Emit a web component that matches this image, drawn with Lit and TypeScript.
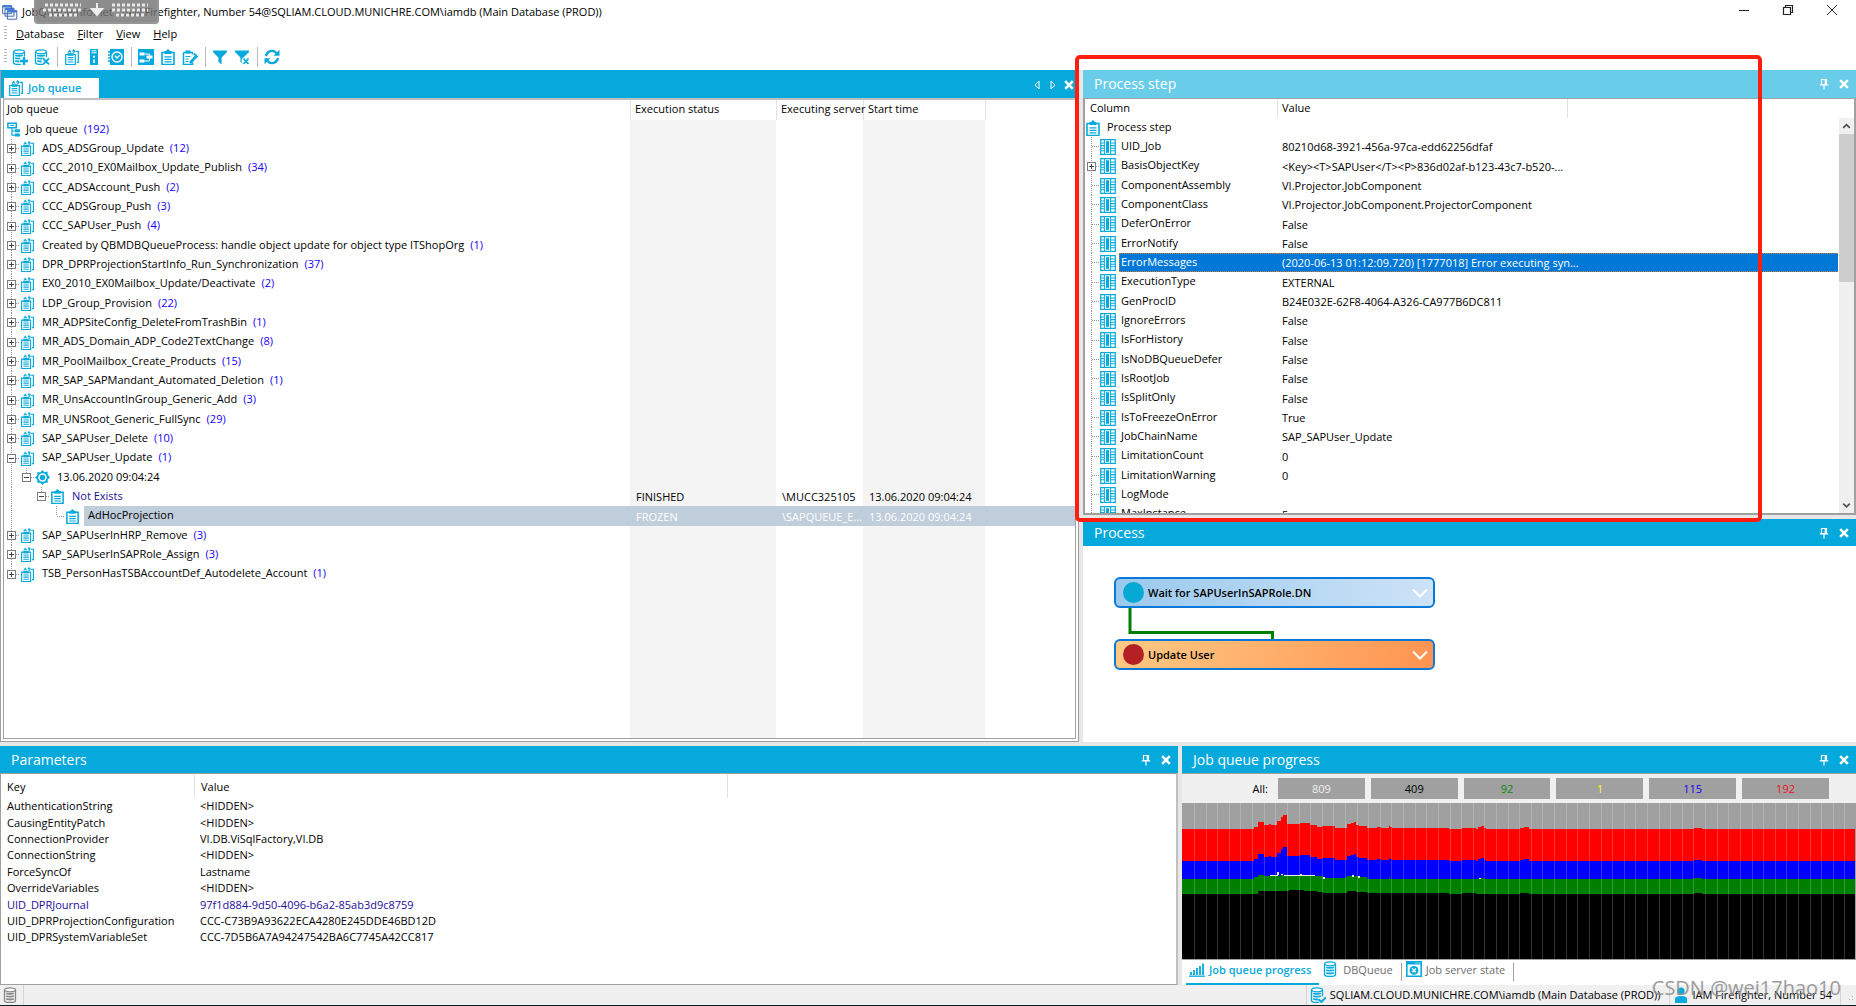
import { LitElement, html, svg, css, nothing } from "lit";
import { customElement } from "lit/decorators.js";
import { classMap } from "lit/directives/class-map.js";

/* ---------- icons ---------- */

const clip = svg`<path d="M2 3.5h12v12H2z" fill="#fff" stroke="currentColor" stroke-width="1.6"/><path d="M4.5 2h7v3h-7z" fill="currentColor"/><circle cx="8" cy="1.8" r="1.6" fill="currentColor"/><path d="M4.5 7.8h7M4.5 10.3h7M4.5 12.8h7" stroke="currentColor" stroke-width="1.3"/>`;

const cylinder = svg`<path d="M1.5 3v10.5c0 2.6 11 2.6 11 0V3" fill="none" stroke="currentColor" stroke-width="1.3"/><ellipse cx="7" cy="2.8" rx="5.5" ry="2" fill="#fff" stroke="currentColor" stroke-width="1.3"/><path d="M3.2 6.2c1.5.9 6.1.9 7.6 0M3.2 9c1.5.9 6.1.9 7.6 0M3.2 11.8c1.5.9 6.1.9 7.6 0" fill="none" stroke="currentColor" stroke-width="1.8"/>`;

const funnel = svg`<path d="M1 1.5h14v1.6L9.6 8.6v6.6L6.4 13V8.6L1 3.1z" fill="currentColor"/>`;

const icons: Record<string, unknown> = {
  clip,
  clips: svg`<path d="M1.7 5.5h9.6v10H1.7z" fill="#fff" stroke="currentColor" stroke-width="1.2"/><path d="M3.6 4.2h5.8v2.6H3.6z" fill="currentColor"/><path d="M4 3.6l1.6-2 1.4 2M8.6 2.6l1-1.8 1.2 1.4-1.4 2" fill="none" stroke="currentColor" stroke-width="1.2"/><path d="M3.6 8.6h5.8M3.6 10.8h5.8M3.6 13h5.8" stroke="currentColor" stroke-width="1.1"/><path d="M11.6 2.4h2.7v11h-1.6" fill="none" stroke="currentColor" stroke-width="1.2"/>`,
  root: svg`<path d="M2 1.2h9v5H2z" fill="#fff" stroke="currentColor" stroke-width="1.6"/><path d="M4.5 3.7h4M6.3 6.5v8M6.3 9.6h3M6.3 14h3" fill="none" stroke="currentColor" stroke-width="1.2"/><path d="M9.4 7.8h5.4v3.2H9.4zM9.4 12.3h5.4v3.2H9.4z" fill="currentColor"/>`,
  gear: svg`<path d="M8 0l2 2.3 3.4-.6.1 3.2L16 8l-2.5 2.3.1 3.3-3.4-.1L8 16l-2.2-2.5-3.4.1.1-3.3L0 8l2.5-2.4-.1-3.3 3.4.1z" fill="currentColor"/><circle cx="8" cy="8" r="4.5" fill="#fff"/><circle cx="8" cy="8" r="2.9" fill="currentColor"/>`,
  column: svg`<path d="M.7.7h14.6v14.6H.7z" fill="#fff" stroke="currentColor" stroke-width="1.2"/><path d="M1 4h3.4M1 6.6h3.4M1 9.2h3.4M1 11.8h3.4M10.6 4H15M10.6 6.6H15M10.6 9.2H15M10.6 11.8H15" stroke="currentColor" stroke-width="1.1"/><path d="M4.4 1v14M10.6 1v14" stroke="currentColor" stroke-width="1"/><path d="M6 2.2h3v11.6H6z" fill="currentColor"/>`,
  cylinder,
  dbAdd: svg`${cylinder}<circle cx="12" cy="12" r="4.6" fill="#fff"/><path d="M12 8v8M8 12h8" stroke="currentColor" stroke-width="2.4"/>`,
  dbDel: svg`${cylinder}<circle cx="12" cy="12.4" r="4.4" fill="#fff"/><path d="M9 9.4l6 6M15 9.4l-6 6" stroke="currentColor" stroke-width="1.8"/>`,
  dbCheck: svg`${cylinder}<path d="M8 11l8-3v8H9z" fill="#f0f0f0"/><path d="M8.6 12.2l2.8 2.8 4.4-4.6" fill="none" stroke="currentColor" stroke-width="2"/>`,
  remote: svg`<path d="M4 0h8v16H4z" fill="currentColor"/><path d="M5.5 1.8h5M5.5 3.8h5" stroke="#fff" stroke-width="1"/><path d="M7 6.8h2v1.6H7zM7.2 10.5h1.6v3.5H7.2z" fill="#fff"/>`,
  clock: svg`<path d="M2 0h14v16H2z" fill="currentColor"/><path d="M0 3h3M0 6h3M0 9h3M0 12h3" stroke="currentColor" stroke-width="1.4"/><circle cx="9" cy="8" r="5" fill="none" stroke="#fff" stroke-width="1.4"/><path d="M6.8 6.8L9 9l2.6-2.6" fill="none" stroke="#fff" stroke-width="1.3"/>`,
  panels: svg`<path d="M0 0h16v16H0z" fill="currentColor"/><path d="M1.5 3.5h5v3h-5zM8.5 6.5h6v3h-6zM1.500 10.500h5v3h-5z" fill="#fff"/><path d="M6.500 5h5v2M6.500 12h5V9" fill="none" stroke="#fff" stroke-width="1"/>`,
  edit: svg`<path d="M1.5 3.500h9v2M1.5 3.500v12h9v-2" fill="none" stroke="currentColor" stroke-width="1.5"/><path d="M3.500 1.500h5v3h-5z" fill="currentColor"/><path d="M3.5 7.5h5M3.5 10h3M3.5 12.5h3" stroke="currentColor" stroke-width="1.2"/><path d="M8 14l6.5-7" stroke="currentColor" stroke-width="2.6"/><path d="M12 4.5l3.5 3.5" stroke="currentColor" stroke-width="1.8"/>`,
  funnel,
  funnelX: svg`${funnel}<circle cx="12" cy="12" r="4.5" fill="#fff"/><path d="M9.5 9.5l5 5.5M14.5 9.5l-5 5.5" stroke="currentColor" stroke-width="1.7"/>`,
  refresh: svg`<path d="M2 7a6 6 0 0 1 10.6-2.8M14 9a6 6 0 0 1-10.6 2.8" fill="none" stroke="currentColor" stroke-width="2.3"/><path d="M15.5.8v6h-6zM.5 15.2v-6h6z" fill="currentColor"/>`,
  bars: svg`<path d="M0 15.2h16" stroke="currentColor" stroke-width="1.3"/><path d="M2 11v3M5 9v5M8 7v7M11 5v9M14 2.5v11.5" stroke="currentColor" stroke-width="1.8"/>`,
  server: svg`<path d="M.8.8h14.4v14.4H.8z" fill="#fff" stroke="currentColor" stroke-width="1.6"/><path d="M1 2.2h14" stroke="currentColor" stroke-width="2.6"/><path d="M9.5 2h1M11.5 2h1M13.3 2h1" stroke="#fff" stroke-width="1"/><circle cx="8" cy="9.4" r="4.4" fill="currentColor"/><path d="M6.2 7.6l3.6 3.6M9.8 7.6l-3.6 3.6" stroke="#fff" stroke-width="1.4"/>`,
  user: svg`<circle cx="8" cy="4" r="3.6" fill="currentColor"/><path d="M2 16v-4.5c0-3.5 12-3.5 12 0V16z" fill="currentColor"/>`,
  pin: svg`<path d="M5.5 3.5h5v5h-5zM9.3 3.5v5M3.8 8.8h8.4M8 9v4.5" fill="none" stroke="currentColor" stroke-width="1.2"/>`,
  close: svg`<path d="M4.2 4.2l7.6 7.6M11.8 4.2l-7.6 7.6" stroke="currentColor" stroke-width="2.6"/>`,
  prev: svg`<path d="M10 4v8L6 8z" fill="none" stroke="currentColor"/>`,
  next: svg`<path d="M6 4v8l4-4z" fill="none" stroke="currentColor"/>`,
  min: svg`<path d="M3 8.5h10" stroke="currentColor"/>`,
  restore: svg`<path d="M3.5 5.5h7v7h-7zM5.5 5.5v-2h7v7h-2" fill="none" stroke="currentColor" stroke-width="1.2"/>`,
  shut: svg`<path d="M3 3l10 10M13 3L3 13" stroke="currentColor"/>`,
  up: svg`<path d="M4.5 10L8 6.5l3.5 3.5" fill="none" stroke="currentColor" stroke-width="1.8"/>`,
  down: svg`<path d="M4.5 6.5L8 10l3.500-3.500" fill="none" stroke="currentColor" stroke-width="1.8"/>`,
  chevron: svg`<path d="M1 4.5l7 7 7-7" fill="none" stroke="#fff" stroke-width="2"/>`,
};

const icon = (name: string) =>
  html`<svg class="icon" viewBox="0 0 16 16" aria-hidden="true">${icons[name]}</svg>`;

/* ---------- data ---------- */

interface QueueRow {
  level: number;
  icon: string;
  label: string;
  count?: number;
  open?: boolean;
  leaf?: boolean;
  last?: boolean;
  link?: boolean;
  selected?: boolean;
  cells?: string[];
}

const chain = (label: string, count: number, extra: Partial<QueueRow> = {}): QueueRow => ({
  level: 0, icon: "clips", label, count, ...extra,
});

const queue: QueueRow[] = [
  chain("ADS_ADSGroup_Update", 12),
  chain("CCC_2010_EX0Mailbox_Update_Publish", 34),
  chain("CCC_ADSAccount_Push", 2),
  chain("CCC_ADSGroup_Push", 3),
  chain("CCC_SAPUser_Push", 4),
  chain("Created by QBMDBQueueProcess: handle object update for object type ITShopOrg", 1),
  chain("DPR_DPRProjectionStartInfo_Run_Synchronization", 37),
  chain("EX0_2010_EX0Mailbox_Update/Deactivate", 2),
  chain("LDP_Group_Provision", 22),
  chain("MR_ADPSiteConfig_DeleteFromTrashBin", 1),
  chain("MR_ADS_Domain_ADP_Code2TextChange", 8),
  chain("MR_PoolMailbox_Create_Products", 15),
  chain("MR_SAP_SAPMandant_Automated_Deletion", 1),
  chain("MR_UnsAccountInGroup_Generic_Add", 3),
  chain("MR_UNSRoot_Generic_FullSync", 29),
  chain("SAP_SAPUser_Delete", 10),
  chain("SAP_SAPUser_Update", 1, { open: true }),
  { level: 1, icon: "gear", label: "13.06.2020 09:04:24", open: true, last: true },
  { level: 2, icon: "clip", label: "Not Exists", open: true, last: true, link: true, cells: ["FINISHED", "\\MUCC325105", "13.06.2020 09:04:24"] },
  { level: 3, icon: "clip", label: "AdHocProjection", leaf: true, last: true, selected: true, cells: ["FROZEN", "\\SAPQUEUE_E...", "13.06.2020 09:04:24"] },
  chain("SAP_SAPUserInHRP_Remove", 3),
  chain("SAP_SAPUserInSAPRole_Assign", 3),
  chain("TSB_PersonHasTSBAccountDef_Autodelete_Account", 1, { last: true }),
];

const step: [string, string][] = [
  ["UID_Job", "80210d68-3921-456a-97ca-edd62256dfaf"],
  ["BasisObjectKey", "<Key><T>SAPUser</T><P>836d02af-b123-43c7-b520-..."],
  ["ComponentAssembly", "VI.Projector.JobComponent"],
  ["ComponentClass", "VI.Projector.JobComponent.ProjectorComponent"],
  ["DeferOnError", "False"],
  ["ErrorNotify", "False"],
  ["ErrorMessages", "(2020-06-13 01:12:09.720) [1777018] Error executing syn..."],
  ["ExecutionType", "EXTERNAL"],
  ["GenProcID", "B24E032E-62F8-4064-A326-CA977B6DC811"],
  ["IgnoreErrors", "False"],
  ["IsForHistory", "False"],
  ["IsNoDBQueueDefer", "False"],
  ["IsRootJob", "False"],
  ["IsSplitOnly", "False"],
  ["IsToFreezeOnError", "True"],
  ["JobChainName", "SAP_SAPUser_Update"],
  ["LimitationCount", "0"],
  ["LimitationWarning", "0"],
  ["LogMode", ""],
  ["MaxInstance", "5"],
];

const parameters: [string, string][] = [
  ["AuthenticationString", "<HIDDEN>"],
  ["CausingEntityPatch", "<HIDDEN>"],
  ["ConnectionProvider", "VI.DB.ViSqlFactory,VI.DB"],
  ["ConnectionString", "<HIDDEN>"],
  ["ForceSyncOf", "Lastname"],
  ["OverrideVariables", "<HIDDEN>"],
  ["UID_DPRJournal", "97f1d884-9d50-4096-b6a2-85ab3d9c8759"],
  ["UID_DPRProjectionConfiguration", "CCC-C73B9A93622ECA4280E245DDE46BD12D"],
  ["UID_DPRSystemVariableSet", "CCC-7D5B6A7A94247542BA6C7745A42CC817"],
];

/* Stacked step series: [start x, top y] pairs in chart units. */
type Series = [number, number][];
const failed: Series = [
  [0, 78], [216, 73], [227, 58], [245, 66], [261, 64], [267, 66], [285, 55], [297, 43], [303, 35],
  [315, 63], [354, 61], [384, 66], [407, 71], [420, 69], [459, 76], [489, 74], [495, 63], [507, 61],
  [516, 56], [522, 66], [531, 70], [555, 76], [587, 73], [598, 76], [621, 69], [626, 73], [632, 76],
  [801, 79], [842, 76], [882, 79], [889, 73], [898, 70], [906, 74], [912, 79], [1017, 76], [1028, 73],
  [1044, 79], [1538, 76], [1562, 79], [2022, 79],
];
const processing: Series = failed.map(([x, y]) => [x, y + 96]);
const ready: Series = [
  [0, 229], [216, 223], [227, 216], [245, 218], [297, 217], [401, 219], [424, 226], [489, 223],
  [495, 218], [531, 221], [555, 227], [621, 223], [626, 227], [801, 229], [842, 227], [882, 229],
  [898, 224], [906, 229], [1017, 227], [1044, 229], [1538, 226], [1562, 229], [2022, 229],
];
const waiting: Series = [
  [0, 273], [227, 265], [321, 261], [366, 264], [407, 267], [424, 270], [495, 264], [524, 267],
  [555, 270], [801, 273], [842, 270], [882, 273], [1017, 270], [1044, 273], [1538, 269], [1562, 273], [2022, 273],
];
const sparks = [
  [264, 217, 24, 3], [285, 206, 6, 11], [297, 212, 5, 4], [305, 217, 96, 3], [354, 212, 6, 5],
  [423, 222, 6, 5], [511, 216, 6, 5], [529, 220, 6, 4], [893, 225, 6, 4],
];
const area = (s: Series) =>
  `M${s[0][0]} 470V${s[0][1]}` + s.slice(1).map(([x, y]) => `H${x}V${y}`).join("") + "V470z";

const totals = [
  ["809", "white"], ["409", "black"], ["92", "green"], ["1", "yellow"], ["115", "blue"], ["192", "red"],
];

const tools = [
  [["dbAdd", "Connect"], ["dbDel", "Disconnect"]],
  [["clips", "Job queue"], ["remote", "Server"], ["clock", "Schedules"]],
  [["panels", "Process"], ["clip", "Process step"], ["edit", "Parameters"]],
  [["funnel", "Filter"], ["funnelX", "Clear filter"]],
  [["refresh", "Refresh"]],
];

@customElement("app-root")
export class AppRoot extends LitElement {
  static styles = css`
    :host {
      display: flex;
      flex-direction: column;
      height: 100vh;
      min-width: 1100px;
      overflow: hidden;
      background: #fff;
      color: #000;
      font: 11px/19px "Open Sans", "Noto Sans", sans-serif;
      --blue: #06a9dc;
      --edge: #a0a0a0;
    }
    * { box-sizing: border-box; }
    button { font: inherit; color: inherit; background: none; border: 0; padding: 0; margin: 0; }
    .icon { width: 16px; height: 16px; flex: none; display: block; color: var(--blue); }
    table { border-collapse: separate; border-spacing: 0; table-layout: fixed; width: 100%; }
    th, td { padding: 0 0 0 5px; text-align: left; font-weight: 400; white-space: nowrap; }
    td { line-height: 17px; }

    .titlebar { display: flex; align-items: center; height: 24px; flex: none; position: relative; padding-left: 2px; }
    .titlebar h1 { font: inherit; margin: 0 auto 0 4px; padding-bottom: 2px; }
    .handle { position: absolute; left: 34px; top: 0; width: 125px; height: 24px; }
    .controls { display: flex; margin-right: 2px; align-self: flex-start; padding-top: 2px; }
    .controls button { width: 44px; display: flex; justify-content: center; }
    .controls .icon { color: #222; }

    .menubar, .toolbar { display: flex; align-items: center; flex: none; padding: 0 0 2px 4px; }
    .menubar { height: 21px; }
    .toolbar { height: 25px; }
    .grip { width: 3px; height: 15px; margin-right: 2px; background: repeating-linear-gradient(#b8b8b8 0 1px, transparent 1px 3px); }
    .menubar button { padding: 0 6px 0 7px; }
    .toolbar button { width: 22px; height: 22px; display: flex; align-items: center; justify-content: center; }
    .sep { width: 1px; height: 20px; margin: 0 3px 0 4px; background: #b8b8b8; }

    .workspace { flex: 1; min-height: 0; display: flex; flex-direction: column; gap: 4px; background: #e7e7e7; }
    .upper { flex: 672 1 0; min-height: 0; display: grid; grid-template-columns: 1079fr 773fr; gap: 4px; }
    .lower { flex: 239 1 0; min-height: 0; display: grid; grid-template-columns: 1178fr 674fr; gap: 4px; }
    .side { display: flex; flex-direction: column; gap: 4px; min-width: 0; min-height: 0; }
    .pane { display: flex; flex-direction: column; background: #fff; min-width: 0; min-height: 0; }
    .bar { display: flex; align-items: center; height: 28px; flex: none; padding: 0 4px 0 11px; color: #fff; background: var(--blue); }
    .bar h2 { font: 400 14px/20px "Open Sans", "Noto Sans", sans-serif; margin: 0 auto 0 0; }
    .bar button { margin-left: 4px; }
    .bar .icon { color: #fff; }
    .active .bar { background: #69cdea; }

    .queue { border: solid var(--edge); border-width: 0 1px 1px; }
    .queue .bar { align-items: flex-end; padding: 0 1px 0 3px; }
    .queue .bar .tab { display: flex; align-items: center; gap: 4px; height: 20px; padding: 0 18px 0 4px; margin: 0 auto 0 0; background: #fff; color: var(--blue); font-weight: 600; }
    .tab span { padding-bottom: 2px; }
    .queue .bar .tab .icon { color: var(--blue); }
    .queue .bar .nav { margin: 0 0 5px; }
    .grid { flex: 1; min-height: 0; overflow: hidden; margin: 0 2px 2px; border: solid var(--edge); border-width: 2px 1px 1px; border-top-color: #c0c0c0; }
    .grid table { height: 100%; }
    th { height: 20px; padding-bottom: 3px; line-height: 17px; background: #fff; }
    th + th { border-left: 1px solid #e2e2e2; padding-left: 4px; }
    .grid th.name { padding-left: 3px; }
    .grid td.name { padding-left: 1px; }
    .w-name { width: 626px; }
    .w-status { width: 146px; }
    .w-server { width: 87px; }
    .w-start { width: 122px; }
    .shade { background: #f4f4f4; }
    tbody tr { --h: 19px; }
    tbody tr:nth-child(3n) { --h: 20px; }
    tbody td { height: var(--h); }
    tbody .filler td { height: auto; }
    .grid td + td { padding-left: 6px; }

    .node { display: flex; align-items: center; height: var(--h); }
    .node .icon { width: 15px; height: 15px; }
    .guide { width: 15px; align-self: stretch; flex: none; display: flex; align-items: center; padding-left: 2px; }
    .line, .tee, .elbow { background-repeat: no-repeat; }
    .line {
      background-image: repeating-linear-gradient(#999 0 1px, transparent 1px 2px);
      background-size: 1px 100%; background-position: 6px 0;
    }
    .tee, .elbow {
      background-image: repeating-linear-gradient(#999 0 1px, transparent 1px 2px), repeating-linear-gradient(90deg, #999 0 1px, transparent 1px 2px);
      background-size: 1px 100%, 9px 1px; background-position: 6px 0, 7px 50%;
    }
    .elbow { background-size: 1px 50%, 9px 1px; }
    .twist { width: 9px; height: 9px; border: 1px solid #7c7c7c; background: #fff; display: grid; place-items: center; }
    .twist svg { width: 7px; height: 7px; display: block; }
    .label { padding: 0 0 2px 7px; flex: 1; height: var(--h); line-height: 17px; }
    .root .label { padding-left: 5px; }
    .root .node { padding-left: 1px; }
    .count { color: #1400ff; margin-left: 6px; }
    .link { color: #1c0d9b; }
    .picked td + td, .picked .label { background: #c0cddb; }
    .picked td + td { color: #fff; }
    .picked .label { margin-left: 4px; padding-left: 4px; }

    .step { flex: 445 1 0; position: relative; }
    .flow { flex: 223 1 0; }
    .flow .bar { height: 27px; }
    .marker { position: absolute; left: -8px; right: 94px; top: -15px; bottom: -7px; border: 4px solid #ff1f12; border-radius: 5px; pointer-events: none; }
    .list { flex: 1; min-height: 0; overflow: hidden; border: 2px solid var(--edge); border-width: 1px 2px 2px; display: flex; flex-direction: column; }
    .rows { flex: 1; min-height: 0; overflow: hidden; display: flex; }
    .rows table { align-self: flex-start; }
    .list th { height: 19px; padding-bottom: 2px; }
    .w-col { width: 192px; }
    .w-val { width: 290px; }
    .list .name { padding-left: 0; }
    .step .node .icon { width: 16px; height: 16px; }
    .step .root .node { padding-left: 0; }
    .step .label { padding-left: 5px; }
    .step .hot .label { margin-left: 3px; padding-left: 1px; }
    .step .root .label { padding-left: 6px; }
    .hot td + td, .hot .label { background: #0078d7; color: #fff; }
    .hot td + td { border: dotted #d08030; border-width: 1px 0; }
    .hot .label { border: dotted #d08030; border-width: 1px 0 1px 1px; line-height: 16px; }
    .scroll { width: 15px; flex: none; background: #f0f0f0; display: flex; flex-direction: column; margin-left: 1px; }
    .scroll .icon { color: #505050; width: 15px; }
    .thumb { flex: 148 1 0; background: #cdcdcd; }
    .rest { flex: 214 1 0; }

    .canvas { position: relative; flex: 1; }
    .card { position: absolute; left: 31px; width: 321px; height: 31px; display: flex; align-items: center; gap: 4px; padding: 0 5px 0 7px; border: 2px solid #0c78d8; border-radius: 6px; font-weight: 600; }
    .card .dot { width: 21px; height: 21px; border-radius: 50%; }
    .card .icon { margin-left: auto; }
    .wait { top: 31px; background: linear-gradient(100deg, #9ac9ee, #cde3f7); }
    .wait .dot { background: #06a9d4; }
    .update { top: 93px; background: linear-gradient(120deg, #ffca85, #ff9350); }
    .update .dot { background: #b52025; }
    .wire { position: absolute; left: 45px; top: 62px; width: 150px; height: 31px; }

    .params .bar { height: 27px; }
    .params .list { border-width: 1px 2px 1px 1px; border-right-color: #c0c0c0; }
    .params .list th { height: 24px; padding-bottom: 0; }
    .w-key { width: 193px; }
    .w-value { width: 533px; }
    .params th, .params td { padding-left: 6px; }
    .params td { line-height: 16px; }
    .params tbody tr { --h: 16px; }
    .params tbody tr:nth-child(5n), .params tbody tr:nth-child(5n + 2) { --h: 17px; }

    .progress .bar { height: 27px; }
    .totals { display: flex; align-items: center; gap: 6px; height: 30px; flex: none; padding: 0 27px 0 0; background: #f0f0f0; border-top: 1px solid var(--edge); }
    .totals .caption { width: 90px; padding-right: 4px; text-align: right; flex: none; }
    .totals button { flex: 1; height: 21px; background: #a0a0a0; }
    .totals .white { color: #f0f0f0; }
    .totals .green { color: #0a8a0a; }
    .totals .yellow { color: #ff0; }
    .totals .blue { color: #1400ff; }
    .totals .red { color: #f01020; }
    .chart { flex: 1; min-height: 0; width: 100%; display: block; border: solid var(--edge); border-width: 0 1px 1px 0; }
    .tabs { display: flex; align-items: stretch; height: 25px; flex: none; padding: 0 4px; color: #6e6e6e; }
    .tabs button { display: flex; align-items: center; gap: 4px; padding: 0 8px 5px 4px; border-bottom: 2px solid transparent; }
    .tabs .on { padding-left: 3px; color: var(--blue); font-weight: 600; border-bottom-color: var(--blue); }
    .tabs .cut { width: 1px; height: 18px; margin: 3px 0; background: #a0a0a0; }

    .status { display: flex; align-items: center; height: 21px; flex: none; background: #f0f0f0; border-bottom: 1px solid #0a2026; position: relative; }
    .status .item { display: flex; align-items: center; gap: 4px; height: 100%; padding: 0 8px 0 3px; border-right: 1px solid #d4d4d4; }
    .status .text { padding-bottom: 2px; }
    .status .gray .icon { color: #888; }
    .status .gray { padding-right: 4px; }
    .status .push { margin-left: auto; border-left: 1px solid #d4d4d4; }
    .status .size { width: 10px; height: 10px; margin: 4px 1px 0 4px; background: radial-gradient(#b0b0b0 0 1px, transparent 1px); background-size: 3px 3px; clip-path: polygon(100% 0, 100% 100%, 0 100%); }
    .watermark { position: absolute; right: 15px; bottom: 3px; font: 20px/28px "Open Sans", "Noto Sans", sans-serif; color: #8c8c8c; opacity: 0.85; }
  `;

  private paneBar(title: string) {
    return html`<header class="bar">
      <h2>${title}</h2>
      <button aria-label="Pin">${icon("pin")}</button>
      <button aria-label="Close">${icon("close")}</button>
    </header>`;
  }

  private twist(open = false) {
    return html`<button class="twist" aria-label=${open ? "Collapse" : "Expand"}>
      <svg viewBox="0 0 7 7"><path d=${open ? "M1 3.5h5" : "M1 3.5h5M3.5 1v5"} stroke="#444" /></svg>
    </button>`;
  }

  private queueRow(r: QueueRow) {
    const guides = Array.from({ length: r.level }, (_, i) => html`<span class="guide ${i === 0 ? "line" : ""}"></span>`);
    return html`<tr class=${classMap({ picked: !!r.selected })}>
      <td class="name">
        <div class="node">
          ${guides}
          <span class="guide ${r.last ? "elbow" : "tee"}">${r.leaf ? nothing : this.twist(r.open)}</span>
          ${icon(r.icon)}
          <span class=${classMap({ label: true, link: !!r.link })}
            >${r.label}${r.count ? html`<span class="count">(${r.count})</span>` : nothing}</span>
        </div>
      </td>
      ${[0, 1, 2].map((i) => html`<td class=${i === 1 ? "" : "shade"}>${r.cells?.[i] ?? ""}</td>`)}
      <td></td>
    </tr>`;
  }

  private renderQueue() {
    return html`<section class="pane queue">
      <header class="bar">
        <button class="tab">${icon("clips")}<span>Job queue</span></button>
        <button class="nav" aria-label="Previous">${icon("prev")}</button>
        <button class="nav" aria-label="Next">${icon("next")}</button>
        <button class="nav" aria-label="Close">${icon("close")}</button>
      </header>
      <div class="grid">
        <table>
          <colgroup><col class="w-name" /><col class="w-status" /><col class="w-server" /><col class="w-start" /><col /></colgroup>
          <thead><tr><th class="name">Job queue</th><th>Execution status</th><th>Executing server</th><th>Start time</th><th></th></tr></thead>
          <tbody>
            <tr class="root">
              <td class="name"><div class="node">${icon("root")}<span class="label">Job queue<span class="count">(192)</span></span></div></td>
              <td class="shade"></td><td></td><td class="shade"></td><td></td>
            </tr>
            ${queue.map((r) => this.queueRow(r))}
            <tr class="filler"><td></td><td class="shade"></td><td></td><td class="shade"></td><td></td></tr>
          </tbody>
        </table>
      </div>
    </section>`;
  }

  private renderStep() {
    const cols = html`<colgroup><col class="w-col" /><col class="w-val" /><col /></colgroup>`;
    return html`<section class="pane step active">
      ${this.paneBar("Process step")}
      <div class="list">
        <table>${cols}<thead><tr><th>Column</th><th>Value</th><th></th></tr></thead></table>
        <div class="rows">
          <table>
            ${cols}
            <tbody>
              <tr class="root"><td class="name"><div class="node">${icon("clip")}<span class="label">Process step</span></div></td><td></td><td></td></tr>
              ${step.map(([key, value]) => html`<tr class=${classMap({ hot: key === "ErrorMessages" })}>
                <td class="name"><div class="node">
                  <span class="guide tee">${key === "BasisObjectKey" ? this.twist() : nothing}</span>
                  ${icon("column")}<span class="label">${key}</span>
                </div></td>
                <td>${value}</td><td></td>
              </tr>`)}
            </tbody>
          </table>
          <div class="scroll">
            <button aria-label="Scroll up">${icon("up")}</button>
            <div class="thumb"></div>
            <div class="rest"></div>
            <button aria-label="Scroll down">${icon("down")}</button>
          </div>
        </div>
      </div>
      <div class="marker"></div>
    </section>`;
  }

  private renderFlow() {
    return html`<section class="pane flow">
      ${this.paneBar("Process")}
      <div class="canvas">
        <svg class="wire" viewBox="0 0 150 31"><path d="M2 0V24.5H144.5V31" fill="none" stroke="#008000" stroke-width="3" /></svg>
        <button class="card wait"><span class="dot"></span>Wait for SAPUserInSAPRole.DN${icon("chevron")}</button>
        <button class="card update"><span class="dot"></span>Update User${icon("chevron")}</button>
      </div>
    </section>`;
  }

  private renderParameters() {
    const cols = html`<colgroup><col class="w-key" /><col class="w-value" /><col /></colgroup>`;
    return html`<section class="pane params">
      ${this.paneBar("Parameters")}
      <div class="list">
        <table>${cols}<thead><tr><th>Key</th><th>Value</th><th></th></tr></thead></table>
        <div class="rows">
          <table>
            ${cols}
            <tbody>
              ${parameters.map(([k, v]) => html`<tr class=${k === "UID_DPRJournal" ? "link" : ""}><td>${k}</td><td>${v}</td><td></td></tr>`)}
            </tbody>
          </table>
        </div>
      </div>
    </section>`;
  }

  private renderProgress() {
    return html`<section class="pane progress">
      ${this.paneBar("Job queue progress")}
      <div class="totals">
        <span class="caption">All:</span>
        ${totals.map(([n, tone]) => html`<button class=${tone}>${n}</button>`)}
      </div>
      <svg class="chart" viewBox="0 0 2022 468" preserveAspectRatio="none" shape-rendering="crispEdges">
        <rect width="2022" height="468" fill="#a0a0a0" />
        <path d=${area(failed)} fill="#f00" />
        <path d=${area(processing)} fill="#00f" />
        <path d=${area(ready)} fill="#008000" />
        <path d=${area(waiting)} fill="#000" />
        ${sparks.map(([x, y, w, h]) => svg`<rect x=${x} y=${y} width=${w} height=${h} fill="#e8f4e0" />`)}
        ${Array.from({ length: 57 }, (_, i) => svg`<rect x=${36 + i * 34.9} y="0" width="3" height="468" fill="#fff" opacity="0.2" />`)}
      </svg>
      <nav class="tabs">
        <button class="on">${icon("bars")}Job queue progress</button>
        <button>${icon("cylinder")}DBQueue</button>
        <span class="cut"></span>
        <button>${icon("server")}Job server state</button>
        <span class="cut"></span>
      </nav>
    </section>`;
  }

  render() {
    return html`
      <header class="titlebar">
        <svg class="icon" viewBox="0 0 16 16" aria-hidden="true">
          <path d="M.7 1.7h9v8h-9zM3 4.2h9v8H3zM5.3 6.7h9.5v8.5H5.3z" fill="#fff" stroke="#4068b0" />
          <path d="M.7 2.5h9M3 5h9M5.3 7.7h9.5" stroke="#3f78d8" stroke-width="1.8" />
        </svg>
        <h1>JobQueueInfo.net - IAM Firefighter, Number 54@SQLIAM.CLOUD.MUNICHRE.COM\\iamdb (Main Database (PROD))</h1>
        <svg class="handle" viewBox="0 0 125 24" aria-hidden="true">
          <path d="M0 0h125v20q0 4-4 4H4q-4 0-4-4z" fill="#707070" opacity="0.8" />
          <path d="M1 0v20q0 3 3 3h117q3 0 3-3V0" fill="none" stroke="#a8a8a8" opacity="0.7" />
          <path d="M11 5h36M9 10h38M15 15h29M78 5h36M78 10h36M82 15h29" stroke="#e8e8e8" stroke-width="3" stroke-dasharray="3 2" />
          <path d="M63 3v9M58 9l5 6 5-6z" fill="#eee" stroke="#eee" stroke-width="2" />
        </svg>
        <div class="controls">
          <button aria-label="Minimize">${icon("min")}</button>
          <button aria-label="Restore">${icon("restore")}</button>
          <button aria-label="Close window">${icon("shut")}</button>
        </div>
      </header>
      <nav class="menubar">
        <span class="grip"></span>
        <button><u>D</u>atabase</button><button><u>F</u>ilter</button><button><u>V</u>iew</button><button><u>H</u>elp</button>
      </nav>
      <div class="toolbar">
        <span class="grip"></span>
        ${tools.map((group, i) => html`${i ? html`<span class="sep"></span>` : nothing}${group.map(([name, label]) => html`<button aria-label=${label}>${icon(name)}</button>`)}`)}
      </div>
      <main class="workspace">
        <div class="upper">
          ${this.renderQueue()}
          <div class="side">${this.renderStep()}${this.renderFlow()}</div>
        </div>
        <div class="lower">${this.renderParameters()}${this.renderProgress()}</div>
      </main>
      <footer class="status">
        <span class="item gray">${icon("cylinder")}</span>
        <span class="item push">${icon("dbCheck")}<span class="text">SQLIAM.CLOUD.MUNICHRE.COM\\iamdb (Main Database (PROD))</span></span>
        <span class="item">${icon("user")}<span class="text">IAM Firefighter, Number 54</span></span>
        <span class="size"></span>
        <span class="watermark">CSDN @wei17hao10</span>
      </footer>
    `;
  }
}
